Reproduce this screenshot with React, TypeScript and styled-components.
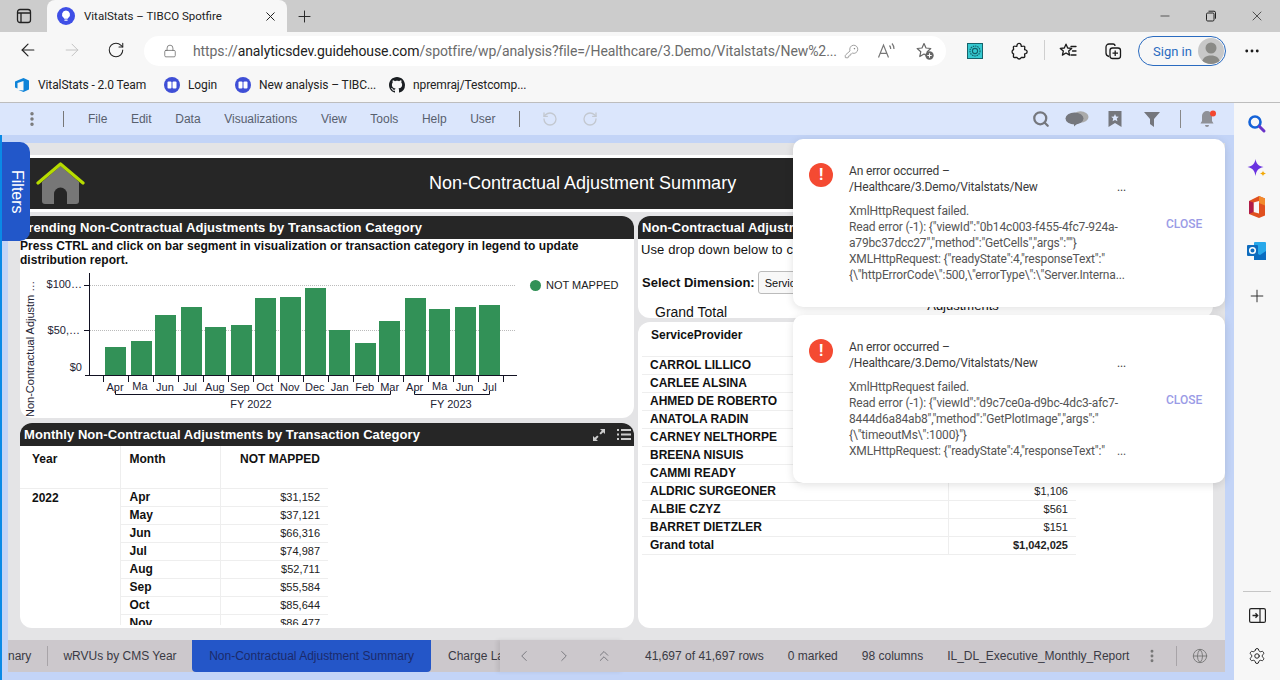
import React from "react";
import styled, { createGlobalStyle } from "styled-components";
import { ArrowLeft, ArrowRight, RotateCw, RotateCcw, Lock, KeyRound, Plus, X, Minus, MoreHorizontal, MoreVertical, ChevronLeft, ChevronRight, ChevronsUp, Globe, Settings, Search } from "lucide-react";

const Global = createGlobalStyle`
  html, body { margin: 0; padding: 0; overflow: hidden; background: #fff; }
  * { box-sizing: border-box; }
`;

const Root = styled.div`
  width: 1280px; height: 680px; display: flex; flex-direction: column; overflow: hidden;
  font-family: "Liberation Sans", Arial, sans-serif; position: relative;
`;
const TabStrip = styled.div`
  height: 32px; background: #cccccc; display: flex; align-items: stretch; flex: none;
`;
const WindowIconSlot = styled.div`
  width: 47px; display: flex; align-items: center; justify-content: center;
`;
const BrowserTab = styled.div`
  width: 240px; background: #f7f7f7; border-radius: 8px 8px 0 0; display: flex; align-items: center;
  padding: 0 9px 0 9px; font: 11.5px Roboto, sans-serif; color: #222;
`;
const TabTitle = styled.span` margin-left: 8px; flex: 1; `;
const NewTab = styled.div` width: 34px; display: flex; align-items: center; justify-content: center; `;
const Spacer = styled.div` flex: 1; `;
const WinControl = styled.div` width: 46px; display: flex; align-items: center; justify-content: center; `;

const Toolbar = styled.div`
  height: 36px; background: #f7f7f7; display: flex; align-items: center; flex: none; position: relative; padding-left: 6px;
`;
const NavButton = styled.div`
  width: 44px; height: 30px; display: flex; align-items: center; justify-content: center; color: #222;
`;
const UrlPill = styled.div`
  width: 802px; height: 30px; background: #fff; border-radius: 15px; display: flex; align-items: center; margin-left: 6px;
  padding-left: 19px; margin-top: 2px; font: 14px Roboto, sans-serif; color: #6b6b6b;
`;
const UrlText = styled.div`
  margin-left: 16px; width: 639px; white-space: nowrap; letter-spacing: -0.09px;
  b { font-weight: 400; color: #222; }
`;
const PillIcon = styled.div<{ $w: number; $ml?: number }>`
  width: ${p => p.$w}px; margin-left: ${p => p.$ml || 0}px; display: flex; justify-content: center; align-items: center; color: #777;
`;
const ToolIcon = styled.div<{ $w: number; $ml?: number }>`
  width: ${p => p.$w}px; margin-left: ${p => p.$ml || 0}px; display: flex; justify-content: center; align-items: center; color: #1a1a1a; margin-top: 2px;
`;
const VSep = styled.div<{ $h: number; $c: string; $ml?: number }>`
  width: 1px; height: ${p => p.$h}px; background: ${p => p.$c}; flex: none; margin-left: ${p => p.$ml || 0}px;
`;
const SignIn = styled.div`
  width: 88px; height: 30px; border: 1.5px solid #2a6bc0; border-radius: 15px; display: flex; align-items: center; margin-left: 3px;
  justify-content: space-between; padding: 0 1px 0 14px; font: 13px Roboto, sans-serif; color: #2a6bc0; margin-top: 2px;
`;
const Avatar = styled.div`
  width: 26px; height: 26px; border-radius: 50%; background: #c8c8c8; overflow: hidden; display: flex; align-items: center; justify-content: center;
`;

const BookmarkBar = styled.div`
  height: 35px; background: #f7f7f7; border-bottom: 1px solid #bdbdbd; display: flex; align-items: center; padding-left: 14px; flex: none;
  font: 12px Roboto, sans-serif; color: #222; letter-spacing: -0.1px;
`;
const Bookmark = styled.div<{ $w: number }>`
  width: ${p => p.$w}px; display: flex; align-items: center; gap: 8px; white-space: nowrap;
`;

const Workspace = styled.div` flex: 1; display: flex; min-height: 0; `;
const Spotfire = styled.div`
  width: 1234px; background: #c3d4f7; display: flex; flex-direction: column; position: relative; border-left: 2px solid #0a8ae6;
`;
const MenuBar = styled.div`
  height: 32px; background: #dbe6fc; display: flex; align-items: center; flex: none; margin-left: -2px;
  font: 12px "Liberation Sans", Arial, sans-serif; color: #58606e;
`;
const MenuDots = styled.div` width: 63px; display: flex; justify-content: center; color: #777; `;
const MenuItems = styled.div` display: flex; gap: 23.6px; padding: 0 23px 0 24px; `;
const UndoSlot = styled.div<{ $ml?: number }>` width: 40px; margin-left: ${p => p.$ml || 0}px; display: flex; justify-content: center; color: #c3c8d0; `;
const MenuRightIcon = styled.div<{ $w: number }>`
  width: ${p => p.$w}px; display: flex; justify-content: center; color: #75777d;
`;
const MenuEndGap = styled.div` width: 8px; `;

const Canvas = styled.div`
  flex: 1; margin: 8px 9px 8px 6px; background: #e4e4e6; display: flex; flex-direction: column; min-height: 0;
`;
const Content = styled.div`
  flex: 1; min-height: 0; padding: 12px; display: flex; flex-direction: column; gap: 4px;
`;
const TitleBand = styled.div`
  height: 57px; flex: none; background: #262626; border-top: 3px solid #fff; border-bottom: 3px solid #fff; display: flex; align-items: center;
  padding-left: 16px; color: #fff; font-size: 18px;
`;
const BandTitle = styled.div` margin-left: 343px; white-space: nowrap; `;
const Columns = styled.div`
  flex: 1; min-height: 0; display: flex; gap: 4px;
`;
const Column = styled.div<{ $w: number; $gap: number }>`
  width: ${p => p.$w}px; display: flex; flex-direction: column; gap: ${p => p.$gap}px;
`;
const Panel = styled.div<{ $h: number }>`
  height: ${p => p.$h}px; background: #fff; border-radius: 12px; overflow: hidden; flex: none; display: flex; flex-direction: column;
`;
const PanelHeader = styled.div<{ $pad: number }>`
  height: 23px; background: #262626; color: #fff; font-weight: 700; font-size: 13px; line-height: 23px; padding-left: ${p => p.$pad}px;
  display: flex; align-items: center; white-space: nowrap; flex: none; letter-spacing: 0.06px;
`;
const HeaderIcons = styled.div` margin-left: auto; display: flex; gap: 12px; padding-right: 3px; align-items: center; `;
const Note = styled.div`
  font-weight: 700; font-size: 12px; line-height: 14px; color: #111; padding-right: 40px; letter-spacing: 0.04px;
`;
const ChartRow = styled.div` display: flex; margin-top: 1px; `;
const Legend = styled.div`
  margin: 10px 0 0 10px; display: flex; align-items: center; gap: 5px; font-size: 11px; color: #222; height: 14px; white-space: nowrap;
`;
const LegendDot = styled.div` width: 11px; height: 11px; border-radius: 50%; background: #329157; `;

const CrossTable = styled.table<{ $w: number; $ml?: number }>`
  border-collapse: collapse; table-layout: fixed; font-size: 12px; color: #111; width: ${p => p.$w}px; margin-left: ${p => p.$ml || 0}px;
  td, th { padding: 0; border-bottom: 1px solid #eeeeee; overflow: hidden; white-space: nowrap; }
`;
const HeadCell = styled.th<{ $w: number; $align?: string; $pad: number; $rule?: boolean; $h?: number }>`
  width: ${p => p.$w}px; height: ${p => p.$h || 42}px; vertical-align: top; text-align: ${p => p.$align || "left"}; padding: 6px ${p => p.$align === "right" ? 8 : 0}px 0 ${p => p.$pad}px !important;
  font-weight: 700; border-right: ${p => p.$rule ? "1px solid #eeeeee" : "none"};
`;
const LabelCell = styled.td<{ $pad: number; $rule?: boolean }>`
  height: 18px; padding-left: ${p => p.$pad}px !important; font-weight: 700; vertical-align: middle;
  border-right: ${p => p.$rule ? "1px solid #eeeeee" : "none"};
`;
const YearCell = styled(LabelCell)` vertical-align: top; padding-top: 2px !important; border-bottom: none !important; `;
const ValueCell = styled.td<{ $bold?: boolean }>`
  height: 18px; text-align: right; padding-right: 8px !important; font-size: 11px; color: #222; font-weight: ${p => p.$bold ? 700 : 400};
`;
const TableClip = styled.div` height: 179px; overflow: hidden; `;

const DropNote = styled.div` font-size: 13px; letter-spacing: 0.1px; color: #111; padding: 3px 0 0 3px; height: 32px; white-space: nowrap; flex: none; `;
const DimensionRow = styled.div`
  display: flex; align-items: center; padding-left: 4px; font-weight: 700; font-size: 13px; color: #111; gap: 3px; height: 22px; flex: none; white-space: nowrap;
`;
const DimSelect = styled.div`
  width: 130px; height: 23px; border: 1px solid #bbb; border-radius: 3px; font-weight: 400; font-size: 11px; padding: 5px 6px; background: #f8f8f8;
`;
const GrandRow = styled.div`
  display: flex; font-size: 14px; color: #111; padding-left: 17px; height: 40px; flex: none;
`;
const GrandLabel = styled.div` padding-top: 11px; width: 272px; line-height: 16px; flex: none; `;
const GrandCol = styled.div` text-align: center; font-size: 13px; margin-top: -8px; line-height: 14px; width: 72px; flex: none; white-space: nowrap; `;

const SpHeader = styled.div`
  font-size: 12px; font-weight: 700; color: #111;
`;

const BottomBar = styled.div`
  height: 32px; flex: none; background: #ccc8cc; display: flex; align-items: center; font-size: 12px; color: #3a3a44;
`;
const SheetTabs = styled.div` width: 492px; display: flex; align-items: stretch; height: 100%; overflow: hidden; flex: none; `;
const SheetTab = styled.div<{ $active?: boolean; $w: number; $start?: number }>`
  width: ${p => p.$w}px; flex: none; display: flex; align-items: center; justify-content: ${p => p.$start !== undefined ? "flex-start" : "center"}; white-space: nowrap;
  background: ${p => p.$active ? "#2456c8" : "transparent"}; color: ${p => p.$active ? "#1b2a6b" : "#3a3a44"};
  border-radius: ${p => p.$active ? "0 0 4px 4px" : "0"};
  padding-left: ${p => p.$start || 0}px;
`;
const TabRule = styled.div` width: 1px; height: 20px; background: #a8a4a8; align-self: center; flex: none; `;
const NavCluster = styled.div`
  display: flex; align-items: center; height: 100%; padding-left: 4px; box-shadow: -3px 0 4px rgba(0,0,0,.08); color: #77777d;
`;
const NavSlot = styled.div` width: 40px; display: flex; justify-content: center; `;
const StatusItem = styled.div<{ $ml: number }>` margin-left: ${p => p.$ml}px; white-space: nowrap; `;
const StatusIcon = styled.div<{ $ml: number }>` margin-left: ${p => p.$ml}px; display: flex; color: #777; `;

const FiltersTab = styled.div`
  position: absolute; left: 0; top: 39px; width: 28px; height: 99px; background: #2257c9; border-radius: 0 10px 10px 0; padding-left: 1px;
  color: #fff; font-size: 16px; writing-mode: vertical-rl; display: flex; align-items: center; justify-content: center; z-index: 3;
`;
const ToastStack = styled.div`
  position: absolute; left: 791px; top: 36px; width: 432px; display: flex; flex-direction: column; gap: 8px; z-index: 4;
`;
const Toast = styled.div`
  height: 168px; background: #fff; border-radius: 10px; box-shadow: 0 2px 8px rgba(0,0,0,.12); display: flex;
  padding: 24px 0 0 16px; font: 12px/16px Roboto, sans-serif; color: #555; letter-spacing: -0.16px;
`;
const ErrorDot = styled.div`
  width: 24px; height: 24px; border-radius: 50%; background: #f44a32; color: #fff; font: 700 16px/24px Roboto, sans-serif; text-align: center; flex: none;
`;
const ToastBody = styled.div` width: 277px; margin-left: 16px; `;
const ToastTitle = styled.div` color: #3a3a3a; margin-bottom: 8px; `;
const ToastLine = styled.div` display: flex; justify-content: space-between; white-space: nowrap; `;
const CloseLink = styled.div`
  margin: 53px 0 0 40px; color: #9a9be6; font-weight: 500; font-size: 12px; line-height: 16px; letter-spacing: 0;
`;

const Sidebar = styled.div`
  width: 46px; background: #f7f7f7; display: flex; flex-direction: column; align-items: center; flex: none;
`;
const SideIcon = styled.div<{ $h: number }>`
  height: ${p => p.$h}px; display: flex; align-items: center; justify-content: center; flex: none;
`;
const SideRule = styled.div` width: 28px; height: 1px; background: #c6c6c6; margin-bottom: 6px; flex: none; `;

const bars: [number, number][] = [[105,347],[131,341],[155,315],[181,307],[205,327],[231,325],[255,298],[280,297],[305,288],[329,330],[355,343],[379,321],[405,298],[429,309],[455,307],[479,305]];
const months = ["Apr","Ma","Jun","Jul","Aug","Sep","Oct","Nov","Dec","Jan","Feb","Mar","Apr","Ma","Jun","Jul"];

const AxisText = styled.text` font: 11px "Liberation Sans", Arial, sans-serif; fill: #223; `;
const ChartSvg = styled.svg` flex: none; display: block; `;

const Chart = () => (
  <ChartSvg width={500} height={150} viewBox="20 268 500 150">
    <line x1={90} x2={516} y1={285.5} y2={285.5} stroke="#bbb" strokeDasharray="1 1" />
    <line x1={90} x2={516} y1={330.5} y2={330.5} stroke="#bbb" strokeDasharray="1 1" />
    {bars.map(([x, y], i) => <rect key={i} x={x} y={y} width={21} height={375 - y} fill="#329157" />)}
    <line x1={89.5} x2={89.5} y1={273} y2={376} stroke="#112" />
    <line x1={85} x2={517} y1={375.5} y2={375.5} stroke="#112" />
    <line x1={84} x2={89} y1={285.5} y2={285.5} stroke="#112" />
    <line x1={84} x2={89} y1={330.5} y2={330.5} stroke="#112" />
    {Array.from({ length: 17 }).map((_, i) => {
      const x = Math.round(103 + i * 24.97) + 0.5;
      return <line key={i} x1={x} x2={x} y1={376} y2={382} stroke="#112" />;
    })}
    <AxisText x={82} y={288} textAnchor="end">$100…</AxisText>
    <AxisText x={80} y={334} textAnchor="end">$50,…</AxisText>
    <AxisText x={82} y={371} textAnchor="end">$0</AxisText>
    {months.map((m, i) => (
      <AxisText key={i} x={115 + i * 24.97} y={m === "Ma" ? 390 : 391} textAnchor="middle">{m}</AxisText>
    ))}
    <path d="M115.5 391V394.5H390.5V391M414.5 391V394.5H489.5V391" fill="none" stroke="#112" />
    <AxisText x={251} y={408} textAnchor="middle">FY 2022</AxisText>
    <AxisText x={451} y={408} textAnchor="middle">FY 2023</AxisText>
    <AxisText transform="translate(34 417) rotate(-90)" x={0} y={0}>Non-Contractual Adjustm …</AxisText>
  </ChartSvg>
);

const leftRows = [["Apr","$31,152"],["May","$37,121"],["Jun","$66,316"],["Jul","$74,987"],["Aug","$52,711"],["Sep","$55,584"],["Oct","$85,644"],["Nov","$86,477"]];
const providers = [["CARROL LILLICO",""],["CARLEE ALSINA",""],["AHMED DE ROBERTO",""],["ANATOLA RADIN",""],["CARNEY NELTHORPE",""],["BREENA NISUIS",""],["CAMMI READY",""],["ALDRIC SURGEONER","$1,106"],["ALBIE CZYZ","$561"],["BARRET DIETZLER","$151"]];

const Favicon = () => (
  <svg width={20} height={20} viewBox="0 0 20 20">
    <circle cx="10" cy="10" r="9" fill="#3f4fe6" />
    <path d="M10 4.500a4 4 0 0 0-2.400 7.200c.4.300.6.700.6 1.100h3.600c0-.4.200-.8.6-1.100A4 4 0 0 0 10 4.500z" fill="#fff" />
    <rect x="8.400" y="13.400" width="3.200" height="1.400" rx=".5" fill="#fff" />
  </svg>
);
const BookIcon = () => (
  <svg width={16} height={16} viewBox="0 0 16 16">
    <circle cx="8" cy="8" r="8" fill="#3f4fd6" />
    <rect x="3.500" y="4.500" width="4" height="7" rx="1" fill="#fff" />
    <rect x="8.500" y="4.500" width="4" height="7" rx="1" fill="#fff" />
  </svg>
);
const GithubIcon = () => (
  <svg width={16} height={16} viewBox="0 0 16 16" fill="#1b1f23">
    <path d="M8 0C3.580 0 0 3.580 0 8c0 3.540 2.290 6.530 5.470 7.590.4.070.55-.17.55-.38 0-.19-.01-.82-.01-1.490-2.010.37-2.530-.49-2.690-.94-.09-.23-.48-.94-.82-1.130-.28-.15-.68-.52-.01-.53.63-.01 1.080.58 1.230.82.72 1.210 1.870.87 2.330.66.07-.52.28-.87.51-1.070-1.780-.2-3.640-.89-3.640-3.950 0-.87.31-1.590.82-2.150-.08-.2-.36-1.020.08-2.120 0 0 .67-.21 2.200.82.64-.18 1.320-.27 2-.27s1.360.09 2 .27c1.530-1.040 2.200-.82 2.200-.82.44 1.100.16 1.920.08 2.120.51.56.82 1.270.82 2.150 0 3.070-1.870 3.750-3.650 3.950.29.25.54.73.54 1.480 0 1.070-.01 1.930-.01 2.200 0 .21.15.46.55.38A8.010 8.010 0 0 0 16 8c0-4.420-3.580-8-8-8z" />
  </svg>
);
const TeamIcon = () => (
  <svg width={16} height={16} viewBox="0 0 16 16">
    <path d="M1 4.500 9.500 1l5.500 2.500v9L9.500 15 4.500 13l5 .6V4L3.500 6v5.500L1 10.500z" fill="#0e83d8" />
  </svg>
);
const ExtIcon = () => (
  <svg width={16} height={16} viewBox="0 0 16 16">
    <rect x=".5" y=".5" width="15" height="15" fill="#35c9d0" stroke="#16636b" />
    <circle cx="8" cy="8" r="5" fill="none" stroke="#14606a" strokeWidth="1.200" strokeDasharray="1.500 .8" />
    <circle cx="8" cy="8" r="2.600" fill="none" stroke="#14606a" strokeWidth="1.100" />
  </svg>
);
const WindowIcon = () => (
  <svg width={16} height={16} viewBox="0 0 16 16" fill="none" stroke="#222" strokeWidth="1.300">
    <rect x="1.500" y="1.500" width="13" height="13" rx="2.500" />
    <path d="M1.500 5h13M5 5v9.500" />
  </svg>
);
const RestoreIcon = () => (
  <svg width={12} height={12} viewBox="0 0 12 12" fill="none" stroke="#222">
    <rect x="1.500" y="3" width="7.500" height="8" rx="1.200" />
    <path d="M3.500 1.200h5.500a1.500 1.500 0 0 1 1.500 1.500v6" />
  </svg>
);
const PuzzleIcon = () => (
  <svg width={18} height={18} viewBox="0 0 18 18" fill="none" stroke="#1a1a1a" strokeWidth="1.300" strokeLinejoin="round">
    <path d="M7 3.200a2.100 2.100 0 0 1 4.100-.2l.2 1.300 2.400-.2a1 1 0 0 1 1.100 1.100l-.2 2.400 1 .2a2 2 0 0 1 0 3.900l-1 .2.2 2.500a1 1 0 0 1-1.100 1.100l-2.300-.2-.3.5a2.200 2.200 0 0 1-3.900 0l-.3-.5-2.400.2a1 1 0 0 1-1.100-1.100l.2-2.500-.5-.3a2.200 2.200 0 0 1 0-3.700l.5-.3-.2-2.400a1 1 0 0 1 1.100-1.100l2.400.2z" />
  </svg>
);
const FavListIcon = () => (
  <svg width={18} height={18} viewBox="0 0 18 18" fill="none" stroke="#1a1a1a" strokeWidth="1.300" strokeLinejoin="round">
    <path d="M7 2.200 8.700 6l4 .4-3 2.700.9 4L7 11l-3.600 2.100.9-4-3-2.700 4-.4z" />
    <path d="M12 4.500h5M13.500 9h3.500M12 13h5" strokeLinecap="round" />
  </svg>
);
const CollectIcon = () => (
  <svg width={18} height={18} viewBox="0 0 18 18" fill="none" stroke="#1a1a1a" strokeWidth="1.300" strokeLinejoin="round">
    <path d="M5 14.500C3 14 2 12.500 2 11V5a3 3 0 0 1 3-3h4a2 2 0 0 1 2 2" />
    <rect x="6" y="6" width="10.500" height="10.500" rx="2.500" />
    <path d="M11.200 8.500v5.500M8.500 11.200H14" />
  </svg>
);
const ReadIcon = () => (
  <svg width={20} height={18} viewBox="0 0 20 18" fill="none" stroke="#777" strokeWidth="1.200">
    <path d="M1.500 15.500 6.500 3l5 12.500M3.200 11.300h6.600" />
    <path d="M12.500 3.500a5 5 0 0 1 1.200 3.500M15 1.500a8 8 0 0 1 2 5.500" />
  </svg>
);
const StarAddIcon = () => (
  <svg width={20} height={20} viewBox="0 0 20 20">
    <path d="M9 2.500 11 7l4.800.5-3.600 3.200 1 4.800L9 13l-4.200 2.500 1-4.800L2.200 7.500 7 7z" fill="none" stroke="#666" strokeWidth="1.200" strokeLinejoin="round" />
    <circle cx="14.500" cy="14.500" r="4.200" fill="#666" />
    <path d="M14.500 12.300v4.400M12.300 14.500h4.400" stroke="#fff" strokeWidth="1.100" />
  </svg>
);
const AvatarFigure = () => (
  <svg width={26} height={26} viewBox="0 0 26 26">
    <circle cx="13" cy="10" r="5.500" fill="#8a8a86" />
    <path d="M3.500 26c.8-6.500 4.500-8.500 9.500-8.500s8.700 2 9.500 8.500z" fill="#8a8a86" />
  </svg>
);
const ChatIcon = () => (
  <svg width={24} height={16} viewBox="0 0 24 16">
    <ellipse cx="15.500" cy="6" rx="8" ry="5.800" fill="#aaa" />
    <ellipse cx="9.500" cy="7.500" rx="9" ry="6" fill="#75777d" />
    <path d="M9 12v3.500l4-3.500z" fill="#75777d" />
  </svg>
);
const BookmarkStar = () => (
  <svg width={14} height={16} viewBox="0 0 14 16">
    <path d="M.5 0h13v16L7 12 .5 16z" fill="#75777d" />
    <path d="m7 3 1.100 2.600 2.700.2-2 1.800.6 2.700L7 8.900 4.600 10.300l.6-2.700-2-1.800 2.700-.2z" fill="#dbe6fc" />
  </svg>
);
const SolidFunnel = () => (
  <svg width={16} height={15} viewBox="0 0 16 15"><path d="M0 0h16L10 7v8L6 12V7z" fill="#75777d" /></svg>
);
const BellDot = () => (
  <svg width={20} height={18} viewBox="0 0 20 18">
    <path d="M9 1a5 5 0 0 0-5 5v5l-1.500 2.500h13L14 11V6a5 5 0 0 0-5-5z" fill="#8f9197" />
    <path d="M7 15h4a2 2 0 0 1-4 0z" fill="#8f9197" />
    <circle cx="15" cy="3.500" r="3" fill="#f4472f" />
  </svg>
);
const HomeIcon = () => (
  <svg width={50} height={44} viewBox="0 0 50 44">
    <path d="M6 20 24.500 4 43 20V39a3 3 0 0 1-3 3H9a3 3 0 0 1-3-3z" fill="#777" />
    <path d="M18 42V32a6 6 0 0 1 13 0v10z" fill="#262626" />
    <path d="M2 21 24.500 2 47 21" fill="none" stroke="#b7dc00" strokeWidth="3.200" strokeLinecap="round" strokeLinejoin="round" />
  </svg>
);
const ExpandIcon = () => (
  <svg width={12} height={12} viewBox="0 0 12 12" fill="#ccc">
    <path d="M7 0h5v5l-1.800-1.800L7.800 5.600 6.400 4.200 8.800 1.800zM5 12H0V7l1.800 1.800 2.400-2.400 1.400 1.400-2.400 2.400z" />
  </svg>
);
const ListIcon = () => (
  <svg width={14} height={11} viewBox="0 0 14 11" fill="#ccc">
    <path d="M0 0h2v2H0zM4 0h10v2H4zM0 4.500h2v2H0zM4 4.500h10v2H4zM0 9h2v2H0zM4 9h10v2H4z" />
  </svg>
);
const Sparkle = () => (
  <svg width={20} height={20} viewBox="0 0 20 20">
    <path d="M8.500 1c.8 4.800 2.500 6.700 8 8-5.500 1.300-7.200 3.700-8 9-.8-5.300-2.500-7.700-8-9 5.500-1.300 7.200-3.200 8-8z" fill="#6a33e0" />
    <path d="M16 12.500c.3 1.800 1 2.500 3 3-2 .5-2.700 1.200-3 3-.3-1.800-1-2.500-3-3 2-.5 2.700-1.200 3-3z" fill="#f2a805" />
  </svg>
);
const BingSearch = () => (
  <svg width={20} height={20} viewBox="0 0 20 20" fill="none">
    <circle cx="8" cy="8" r="5.500" stroke="#1463d8" strokeWidth="2.600" />
    <path d="m12.500 12.500 4.500 4.500" stroke="#6a33c8" strokeWidth="3" strokeLinecap="round" />
  </svg>
);
const OfficeIcon = () => (
  <svg width={18} height={22} viewBox="0 0 18 22">
    <path d="M11 0 17 2.500v17L11 22 1 18V5z" fill="#e0501f" />
    <path d="M5.500 6.500 11 5v12.500L5.500 16z" fill="#f7f7f7" />
    <path d="M11 0 17 2.500v7L11 7z" fill="#f28a2c" />
    <path d="M1 5v13l4.500-2V6.500z" fill="#b01c48" />
  </svg>
);
const OutlookIcon = () => (
  <svg width={20} height={20} viewBox="0 0 20 20">
    <rect x="7" y="1" width="12" height="18" rx="1" fill="#28a8ea" />
    <path d="M7 11l6 3 6-4v9H7z" fill="#0a6cc0" />
    <rect x="0" y="4" width="11" height="11" rx="1" fill="#0f6cbd" />
    <circle cx="5.500" cy="9.500" r="2.800" fill="none" stroke="#fff" strokeWidth="1.500" />
  </svg>
);
const PanelToggle = () => (
  <svg width={17} height={15} viewBox="0 0 17 15" fill="none" stroke="#222" strokeWidth="1.200">
    <rect x=".6" y=".6" width="15.800" height="13.800" rx="1.500" />
    <path d="M11 .6v13.800" />
    <path d="M3.500 7.500h5M6.500 5.300l2.200 2.200-2.200 2.200" strokeWidth="1.300" />
  </svg>
);

export default function App() {
  return (
    <Root>
      <Global />
      <TabStrip>
        <WindowIconSlot><WindowIcon /></WindowIconSlot>
        <BrowserTab>
          <Favicon />
          <TabTitle>VitalStats – TIBCO Spotfire</TabTitle>
          <X size={15} strokeWidth={1.6} color="#222" />
        </BrowserTab>
        <NewTab><Plus size={19} strokeWidth={1.2} color="#222" /></NewTab>
        <Spacer />
        <WinControl><Minus size={14} strokeWidth={1.2} color="#222" /></WinControl>
        <WinControl><RestoreIcon /></WinControl>
        <WinControl><X size={16} strokeWidth={1.1} color="#222" /></WinControl>
      </TabStrip>
      <Toolbar>
        <NavButton><ArrowLeft size={20} strokeWidth={1.4} /></NavButton>
        <NavButton><ArrowRight size={20} strokeWidth={1.2} color="#c4c4c4" /></NavButton>
        <NavButton><RotateCw size={18} strokeWidth={1.4} /></NavButton>
        <UrlPill>
          <Lock size={14} strokeWidth={1.3} color="#666" />
          <UrlText>https://<b>analyticsdev.guidehouse.com</b>/spotfire/wp/analysis?file=/Healthcare/3.Demo/Vitalstats/New%2...</UrlText>
          <PillIcon $w={22} $ml={8}><KeyRound size={15} strokeWidth={1.1} /></PillIcon>
          <PillIcon $w={46} $ml={2}><ReadIcon /></PillIcon>
          <PillIcon $w={30}><StarAddIcon /></PillIcon>
        </UrlPill>
        <ToolIcon $w={44} $ml={7}><ExtIcon /></ToolIcon>
        <ToolIcon $w={44}><PuzzleIcon /></ToolIcon>
        <VSep $h={20} $c="#cfcfcf" $ml={3} />
        <ToolIcon $w={46}><FavListIcon /></ToolIcon>
        <ToolIcon $w={44}><CollectIcon /></ToolIcon>
        <SignIn>Sign in<Avatar><AvatarFigure /></Avatar></SignIn>
        <ToolIcon $w={52}><MoreHorizontal size={18} strokeWidth={1.8} /></ToolIcon>
      </Toolbar>
      <BookmarkBar>
        <Bookmark $w={150}><TeamIcon />VitalStats - 2.0 Team</Bookmark>
        <Bookmark $w={71}><BookIcon />Login</Bookmark>
        <Bookmark $w={154}><BookIcon />New analysis – TIBC...</Bookmark>
        <Bookmark $w={140}><GithubIcon />npremraj/Testcomp...</Bookmark>
      </BookmarkBar>
      <Workspace>
        <Spotfire>
          <MenuBar>
            <MenuDots><MoreVertical size={18} strokeWidth={2.6} /></MenuDots>
            <VSep $h={16} $c="#777" />
            <MenuItems>
              <span>File</span><span>Edit</span><span>Data</span><span>Visualizations</span><span>View</span><span>Tools</span><span>Help</span><span>User</span>
            </MenuItems>
            <VSep $h={16} $c="#777" />
            <UndoSlot $ml={10}><RotateCcw size={16} /></UndoSlot>
            <UndoSlot><RotateCw size={16} /></UndoSlot>
            <Spacer />
            <MenuRightIcon $w={34}><Search size={18} strokeWidth={3} /></MenuRightIcon>
            <MenuRightIcon $w={38}><ChatIcon /></MenuRightIcon>
            <MenuRightIcon $w={38}><BookmarkStar /></MenuRightIcon>
            <MenuRightIcon $w={36}><SolidFunnel /></MenuRightIcon>
            <MenuRightIcon $w={20}><VSep $h={18} $c="#888" /></MenuRightIcon>
            <MenuRightIcon $w={36}><BellDot /></MenuRightIcon>
            <MenuEndGap />
          </MenuBar>
          <Canvas>
            <Content>
              <TitleBand>
                <HomeIcon />
                <BandTitle>Non-Contractual Adjustment Summary</BandTitle>
              </TitleBand>
              <Columns>
                <Column $w={614} $gap={5}>
                  <Panel $h={202}>
                    <PanelHeader $pad={1}>Trending Non-Contractual Adjustments by Transaction Category</PanelHeader>
                    <Note>Press CTRL and click on bar segment in visualization or transaction category in legend to update distribution report.</Note>
                    <ChartRow>
                      <Chart />
                      <Legend><LegendDot />NOT MAPPED</Legend>
                    </ChartRow>
                  </Panel>
                  <Panel $h={205}>
                    <PanelHeader $pad={4}>
                      Monthly Non-Contractual Adjustments by Transaction Category
                      <HeaderIcons><ExpandIcon /><ListIcon /></HeaderIcons>
                    </PanelHeader>
                    <TableClip>
                      <CrossTable $w={308}>
                        <thead>
                          <tr>
                            <HeadCell $w={100} $pad={12} $rule>Year</HeadCell>
                            <HeadCell $w={100} $pad={9} $rule>Month</HeadCell>
                            <HeadCell $w={108} $pad={0} $align="right">NOT MAPPED</HeadCell>
                          </tr>
                        </thead>
                        <tbody>
                          {leftRows.map(([m, v], i) => (
                            <tr key={m}>
                              {i === 0 && <YearCell rowSpan={8} $pad={12} $rule>2022</YearCell>}
                              <LabelCell $pad={9} $rule>{m}</LabelCell>
                              <ValueCell>{v}</ValueCell>
                            </tr>
                          ))}
                        </tbody>
                      </CrossTable>
                    </TableClip>
                  </Panel>
                </Column>
                <Column $w={575} $gap={4}>
                  <Panel $h={102}>
                    <PanelHeader $pad={4}>Non-Contractual Adjustments by Service Provider</PanelHeader>
                    <DropNote>Use drop down below to change dimension</DropNote>
                    <DimensionRow>Select Dimension:<DimSelect>ServiceProvider</DimSelect></DimensionRow>
                    <GrandRow>
                      <GrandLabel>Grand Total</GrandLabel>
                      <GrandCol>Non-Contractual<br />Adjustments</GrandCol>
                    </GrandRow>
                  </Panel>
                  <Panel $h={306}>
                    <CrossTable $w={434} $ml={4}>
                      <thead>
                        <tr>
                          <HeadCell $w={306} $pad={9} $rule $h={34}><SpHeader>ServiceProvider</SpHeader></HeadCell>
                          <HeadCell $w={128} $pad={0} $align="right" $h={34}></HeadCell>
                        </tr>
                      </thead>
                      <tbody>
                        {providers.map(([n, v]) => (
                          <tr key={n}>
                            <LabelCell $pad={8} $rule>{n}</LabelCell>
                            <ValueCell>{v}</ValueCell>
                          </tr>
                        ))}
                        <tr>
                          <LabelCell $pad={8} $rule>Grand total</LabelCell>
                          <ValueCell $bold>$1,042,025</ValueCell>
                        </tr>
                      </tbody>
                    </CrossTable>
                  </Panel>
                </Column>
              </Columns>
            </Content>
            <BottomBar>
              <SheetTabs>
                <SheetTab $w={39} $start={0}>nary</SheetTab>
                <TabRule />
                <SheetTab $w={144}>wRVUs by CMS Year</SheetTab>
                <SheetTab $w={239} $active>Non-Contractual Adjustment Summary</SheetTab>
                <SheetTab $w={80} $start={17}>Charge Lag</SheetTab>
              </SheetTabs>
              <NavCluster>
                <NavSlot><ChevronLeft size={18} strokeWidth={1.3} /></NavSlot>
                <NavSlot><ChevronRight size={18} strokeWidth={1.3} /></NavSlot>
                <NavSlot><ChevronsUp size={18} strokeWidth={1.3} /></NavSlot>
              </NavCluster>
              <StatusItem $ml={21}>41,697 of 41,697 rows</StatusItem>
              <StatusItem $ml={24}>0 marked</StatusItem>
              <StatusItem $ml={24}>98 columns</StatusItem>
              <StatusItem $ml={24}>IL_DL_Executive_Monthly_Report</StatusItem>
              <StatusIcon $ml={15}><MoreVertical size={16} strokeWidth={2.4} /></StatusIcon>
              <VSep $h={20} $c="#a8a4a8" $ml={16} />
              <StatusIcon $ml={15}><Globe size={16} strokeWidth={1.4} /></StatusIcon>
            </BottomBar>
          </Canvas>
          <FiltersTab>Filters</FiltersTab>
          <ToastStack>
            <Toast>
              <ErrorDot>!</ErrorDot>
              <ToastBody>
                <ToastTitle>
                  An error occurred –
                  <ToastLine><span>/Healthcare/3.Demo/Vitalstats/New</span><span>...</span></ToastLine>
                </ToastTitle>
                <ToastLine>XmlHttpRequest failed.</ToastLine>
                <ToastLine>Read error (-1): {'{"viewId":"0b14c003-f455-4fc7-924a-'}</ToastLine>
                <ToastLine>{'a79bc37dcc27","method":"GetCells","args":""}'}</ToastLine>
                <ToastLine>{'XMLHttpRequest: {"readyState":4,"responseText":"'}</ToastLine>
                <ToastLine>{'{\\"httpErrorCode\\":500,\\"errorType\\":\\"Server.Interna...'}</ToastLine>
              </ToastBody>
              <CloseLink>CLOSE</CloseLink>
            </Toast>
            <Toast>
              <ErrorDot>!</ErrorDot>
              <ToastBody>
                <ToastTitle>
                  An error occurred –
                  <ToastLine><span>/Healthcare/3.Demo/Vitalstats/New</span><span>...</span></ToastLine>
                </ToastTitle>
                <ToastLine>XmlHttpRequest failed.</ToastLine>
                <ToastLine>Read error (-1): {'{"viewId":"d9c7ce0a-d9bc-4dc3-afc7-'}</ToastLine>
                <ToastLine>{'8444d6a84ab8","method":"GetPlotImage","args":"'}</ToastLine>
                <ToastLine>{'{\\"timeoutMs\\":1000}"}'}</ToastLine>
                <ToastLine><span>{'XMLHttpRequest: {"readyState":4,"responseText":"'}</span><span>...</span></ToastLine>
              </ToastBody>
              <CloseLink>CLOSE</CloseLink>
            </Toast>
          </ToastStack>
        </Spotfire>
        <Sidebar>
          <SideIcon $h={42}><BingSearch /></SideIcon>
          <SideIcon $h={46}><Sparkle /></SideIcon>
          <SideIcon $h={32}><OfficeIcon /></SideIcon>
          <SideIcon $h={56}><OutlookIcon /></SideIcon>
          <SideIcon $h={34}><Plus size={20} strokeWidth={1.2} color="#333" /></SideIcon>
          <Spacer />
          <SideRule />
          <SideIcon $h={34}><PanelToggle /></SideIcon>
          <SideIcon $h={48}><Settings size={18} strokeWidth={1.3} color="#222" /></SideIcon>
        </Sidebar>
      </Workspace>
    </Root>
  );
}
